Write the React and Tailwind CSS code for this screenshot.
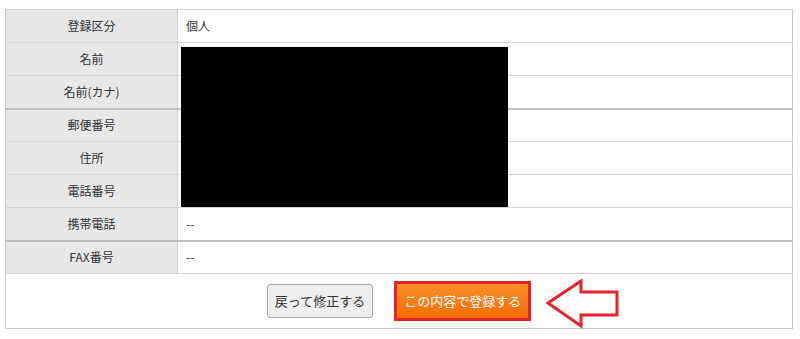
const rows = [
  { label: "登録区分", value: "個人" },
  { label: "名前", value: "" },
  { label: "名前(カナ)", value: "" },
  { label: "郵便番号", value: "", thick: true },
  { label: "住所", value: "" },
  { label: "電話番号", value: "" },
  { label: "携帯電話", value: "--" },
  { label: "FAX番号", value: "--", thick: true },
];

function Arrow() {
  return (
    <svg width="76" height="50" viewBox="0 0 76 50" className="block">
      <path
        d="M3 24 L36 2 L36 13 L72 13 L72 36 L36 36 L36 47 Z"
        fill="#fff"
        stroke="#e8202a"
        strokeWidth="3"
        strokeLinejoin="miter"
      />
    </svg>
  );
}

export default function App() {
  return (
    <div
      className="h-[339px] w-[800px] bg-white pl-[5px] pt-[9px]"
      style={{ fontFamily: '"Noto Sans CJK JP", "Noto Sans", sans-serif' }}
    >
      <div className="relative w-[788px]">
        <table className="w-full border-collapse border border-[#c8c8c8] text-[12px] text-[#333]">
          <tbody>
            {rows.map((r) => (
              <tr
                key={r.label}
                className={
                  r.thick
                    ? "h-[33px] border-t-2 border-[#c0c0c0]"
                    : "h-[33px] border-t border-[#d4d4d4]"
                }
              >
                <th className="w-[172px] border-r border-[#d0d0d0] bg-[#e8e8e8] p-0 text-center font-normal">
                  {r.label}
                </th>
                <td className="px-[8px] py-0">{r.value}</td>
              </tr>
            ))}
            <tr className="h-[55px] border-t border-[#d4d4d4]">
              <td colSpan={2} className="p-0">
                <div className="relative flex items-center justify-center">
                  <button className="h-[34px] rounded-[3px] border border-[#aaa] bg-[#efefef] px-[7px] text-[13px] text-[#333]">
                    戻って修正する
                  </button>
                  <div className="ml-[21px] border-[3px] border-[#e8202a]">
                    <button className="h-[34px] bg-gradient-to-b from-[#fb8d28] to-[#f26c00] px-[7px] text-[13px] text-white">
                      この内容で登録する
                    </button>
                  </div>
                  <div className="absolute left-[539px] top-[-2px]">
                    <Arrow />
                  </div>
                </div>
              </td>
            </tr>
          </tbody>
        </table>
        {/* redaction block */}
        <div className="absolute left-[176px] top-[38px] h-[160px] w-[327px] bg-black" />
      </div>
    </div>
  );
}
